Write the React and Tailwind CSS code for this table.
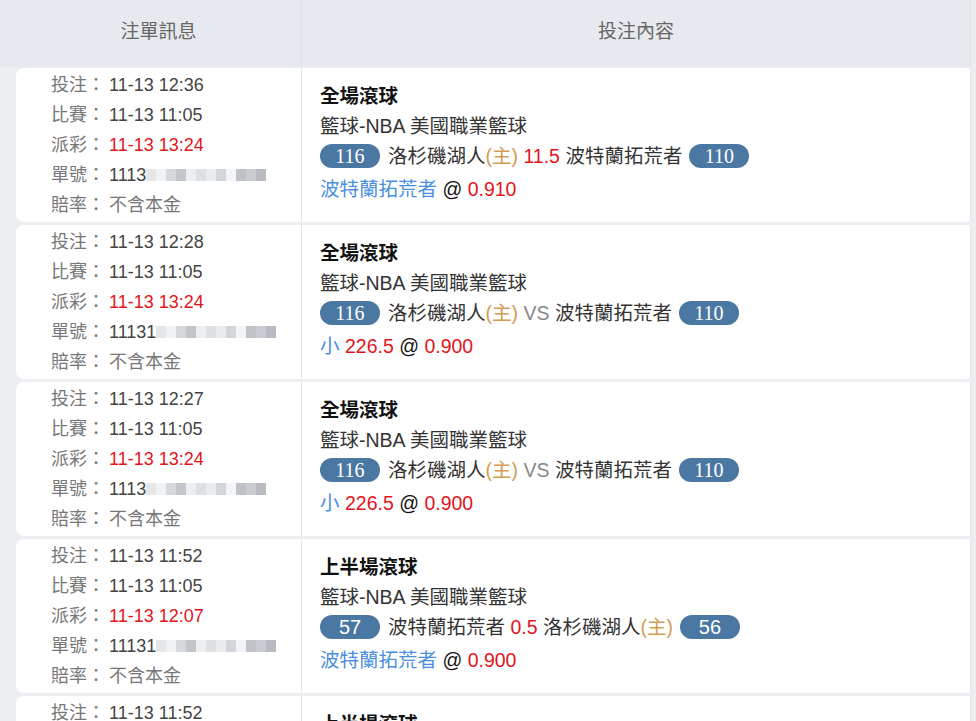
import React from "react";

const rows = [
  {
    bet: "11-13 12:36",
    match: "11-13 11:05",
    settle: "11-13 13:24",
    id: "1113",
    title: "全場滾球",
    left: { n: "116", team: "洛杉磯湖人", home: true },
    mid: { text: "11.5", red: true },
    right: { n: "110", team: "波特蘭拓荒者", home: false },
    serif: true,
    pick: { label: "波特蘭拓荒者", line: null, odds: "0.910" },
  },
  {
    bet: "11-13 12:28",
    match: "11-13 11:05",
    settle: "11-13 13:24",
    id: "11131",
    title: "全場滾球",
    left: { n: "116", team: "洛杉磯湖人", home: true },
    mid: { text: "VS", red: false },
    right: { n: "110", team: "波特蘭拓荒者", home: false },
    serif: true,
    pick: { label: "小", line: "226.5", odds: "0.900" },
  },
  {
    bet: "11-13 12:27",
    match: "11-13 11:05",
    settle: "11-13 13:24",
    id: "1113",
    title: "全場滾球",
    left: { n: "116", team: "洛杉磯湖人", home: true },
    mid: { text: "VS", red: false },
    right: { n: "110", team: "波特蘭拓荒者", home: false },
    serif: true,
    pick: { label: "小", line: "226.5", odds: "0.900" },
  },
  {
    bet: "11-13 11:52",
    match: "11-13 11:05",
    settle: "11-13 12:07",
    id: "11131",
    title: "上半場滾球",
    left: { n: "57", team: "波特蘭拓荒者", home: false },
    mid: { text: "0.5", red: true },
    right: { n: "56", team: "洛杉磯湖人", home: true },
    serif: false,
    pick: { label: "波特蘭拓荒者", line: null, odds: "0.900" },
  },
  {
    bet: "11-13 11:52",
    match: "11-13 11:05",
    settle: "11-13 12:07",
    id: "11131",
    title: "上半場滾球",
    left: { n: "57", team: "波特蘭拓荒者", home: false },
    mid: { text: "0.5", red: true },
    right: { n: "56", team: "洛杉磯湖人", home: true },
    serif: false,
    pick: { label: "波特蘭拓荒者", line: null, odds: "0.900" },
  },
];

// masked order number
const blurShades = [
  "bg-[#e4e6e8]", "bg-[#f1f2f3]", "bg-[#d6d9dc]", "bg-[#c2c6ca]", "bg-[#eceef0]",
  "bg-[#dde0e3]", "bg-[#e9ebed]", "bg-[#d2d6da]", "bg-[#f3f4f5]", "bg-[#bfc3c7]",
  "bg-[#c9cdd1]", "bg-[#b8bcc0]",
];

function Blurred() {
  return (
    <span className="inline-flex h-[18px] items-center blur-[0.6px] align-middle">
      {blurShades.map((c, i) => (
        <span key={i} className={`h-[12px] w-[10px] ${c}`} />
      ))}
    </span>
  );
}

function Pill({ n, serif }) {
  return (
    <span
      className={`inline-flex h-[24px] w-[60px] items-center justify-center rounded-full bg-[#4b77a3] text-[20px] text-white ${
        serif ? "font-['Liberation_Serif',serif]" : ""
      }`}
    >
      {n}
    </span>
  );
}

function Team({ team, home }) {
  return (
    <span className="text-[#333]">
      {team}
      {home && <span className="text-[#d59b52]">(主)</span>}
    </span>
  );
}

function Row({ r }) {
  return (
    <div className="ml-[16px] mb-[3px] flex h-[154px] rounded-l-[8px] bg-white">
      <div className="flex w-[285px] flex-col justify-center pl-[35px] text-[18px] leading-[30px]">
        <div className="flex">
          <span className="w-[58px] text-[#777]">投注：</span>
          <span className="text-[#444]">{r.bet}</span>
        </div>
        <div className="flex">
          <span className="w-[58px] text-[#777]">比賽：</span>
          <span className="text-[#444]">{r.match}</span>
        </div>
        <div className="flex">
          <span className="w-[58px] text-[#777]">派彩：</span>
          <span className="text-[#e5141b]">{r.settle}</span>
        </div>
        <div className="flex items-center">
          <span className="w-[58px] text-[#777]">單號：</span>
          <span className="text-[#444]">{r.id}</span>
          <Blurred />
        </div>
        <div className="flex">
          <span className="w-[58px] text-[#777]">賠率：</span>
          <span className="text-[#777]">不含本金</span>
        </div>
      </div>
      <div className="flex flex-1 flex-col justify-center border-l border-r border-[#e3e5e8] pl-[18px] pb-[5px] text-[19.5px] leading-[30px]">
        <div className="font-bold text-[#111]">{r.title}</div>
        <div className="text-[#333]">籃球-NBA 美國職業籃球</div>
        <div className="flex items-center gap-[7px]">
          <Pill n={r.left.n} serif={r.serif} />
          <span className="ml-[1px]">
            <Team team={r.left.team} home={r.left.home} />{" "}
            <span className={r.mid.red ? "text-[#e5141b]" : "text-[#888]"}>{r.mid.text}</span>{" "}
            <Team team={r.right.team} home={r.right.home} />
          </span>
          <Pill n={r.right.n} serif={r.serif} />
        </div>
        <div className="mt-[3px]">
          <span className="text-[#4a8fdf]">{r.pick.label}</span>{" "}
          {r.pick.line && <span className="text-[#e5141b]">{r.pick.line} </span>}
          <span className="text-[#111]">@</span>{" "}
          <span className="text-[#e5141b]">{r.pick.odds}</span>
        </div>
      </div>
    </div>
  );
}

export default function App() {
  return (
    <div className="min-h-screen w-[976px] overflow-hidden bg-[#eceef2] font-['Liberation_Sans','Noto_Sans_CJK_TC',sans-serif]">
      <div className="flex h-[67px] w-[971px] border-r border-[#dfe2e6] bg-[#e6e9ee] text-[19px] text-[#666]">
        <div className="flex w-[301px] items-center justify-center pl-[16px] pb-[2px]">注單訊息</div>
        <div className="flex flex-1 items-center justify-center border-l border-[#dcdfe3] pb-[2px]">投注內容</div>
      </div>
      <div className="w-[971px] pt-[1px]">
        {rows.map((r, i) => (
          <Row key={i} r={r} />
        ))}
      </div>
    </div>
  );
}
